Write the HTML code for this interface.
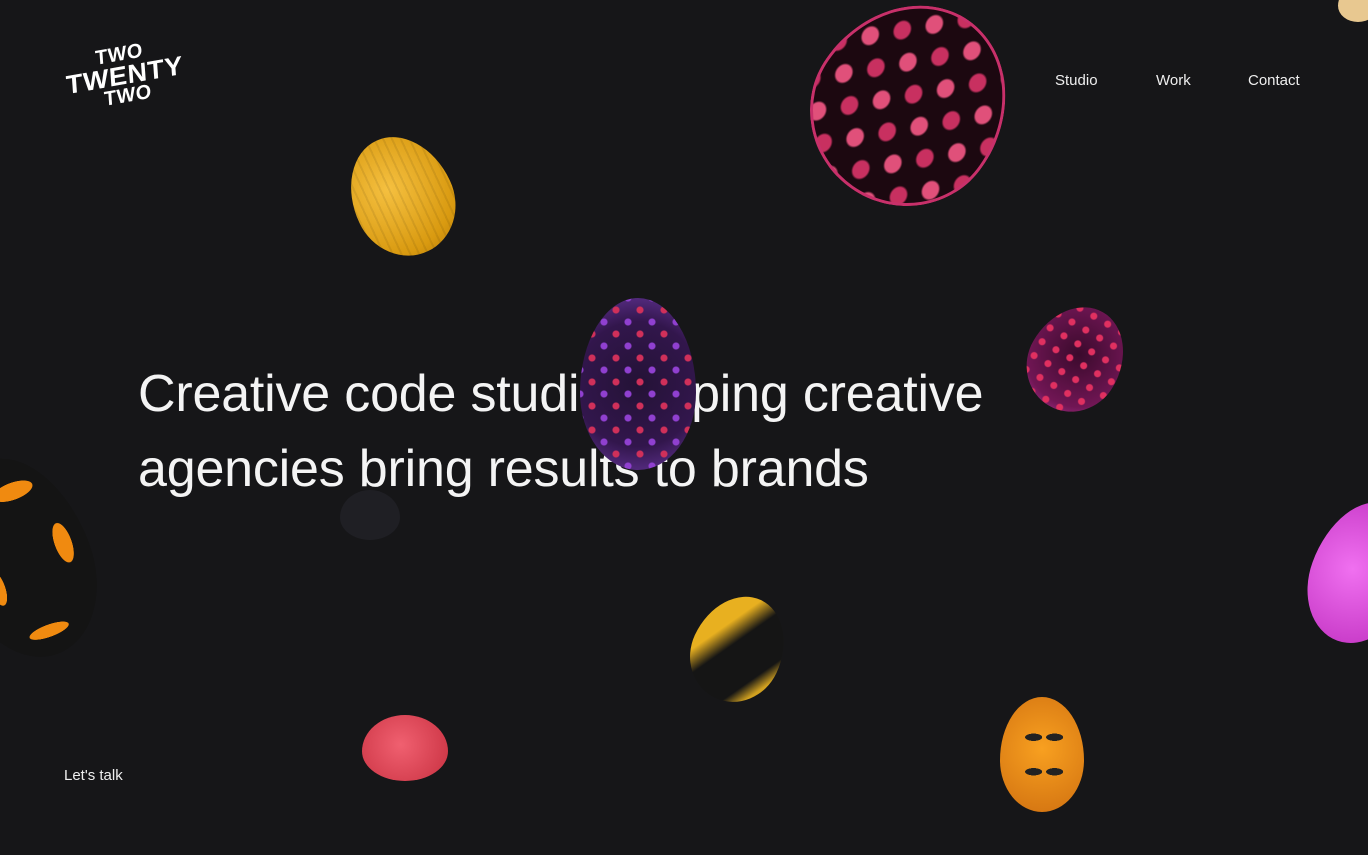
<!DOCTYPE html>
<html><head><meta charset="utf-8"><style>
html,body{margin:0;padding:0;width:1368px;height:855px;overflow:hidden;background:#161618;font-family:"Liberation Sans",sans-serif;color:#fff}
.e{position:absolute;border-radius:50% 50% 50% 50%/55% 55% 45% 45%;overflow:hidden}
.nav{position:absolute;top:72px;font-size:15px;color:#eee}
h1{position:absolute;left:138px;top:357px;margin:0;font-weight:400;font-size:52px;line-height:75px;letter-spacing:-0.2px;color:#f4f4f4;width:950px}
</style></head><body>
<div style="position:absolute;left:62px;top:44px;width:125px;transform:rotate(-10deg) skewX(-6deg);font-weight:900;line-height:21px;text-align:center;letter-spacing:0.5px">
<div style="font-size:20px;margin-left:-8px">TWO</div><div style="font-size:26px;transform:scaleX(1.05)">TWENTY</div><div style="font-size:20px;margin-left:4px">TWO</div></div>
<div class="nav" style="left:1055px">Studio</div>
<div class="nav" style="left:1156px">Work</div>
<div class="nav" style="left:1248px">Contact</div>
<div style="position:absolute;left:64px;top:767px;font-size:15px;color:#eee">Let's talk</div>
<h1>Creative code studio helping creative<br>agencies bring results to brands</h1>
<!-- eggs -->
<div class="e" style="left:815px;top:2px;width:190px;height:205px;transform:rotate(35deg);background:radial-gradient(ellipse 9px 11px,#e0507a 0 80%,transparent 100%) 0 0/46px 46px,radial-gradient(ellipse 9px 11px,#c83060 0 80%,transparent 100%) 23px 23px/46px 46px,#1c0810;box-shadow:inset 0 0 0 3px #c8306a"></div>
<div class="e" style="left:352px;top:135px;width:100px;height:122px;transform:rotate(-25deg);background:repeating-linear-gradient(90deg,rgba(0,0,0,.08) 0 2px,transparent 2px 8px),radial-gradient(circle at 40% 40%,#f5c040,#d99a10 70%,#b57a08)"></div>
<div class="e" style="left:580px;top:298px;width:116px;height:172px;background:radial-gradient(circle,#d0305a 0 3px,transparent 4px) 0 0/24px 24px,radial-gradient(circle,#9040d0 0 3px,transparent 4px) 12px 12px/24px 24px,radial-gradient(circle at 50% 50%,#241236,#32164c 60%,#6a38a0)"></div>
<div class="e" style="left:1030px;top:305px;width:92px;height:108px;transform:rotate(30deg);background:radial-gradient(circle,#e03060 0 3px,transparent 4px) 0 0/16px 16px,radial-gradient(circle at 50% 45%,#3a0a2c,#701654 70%,#b0389a)"></div>
<div class="e" style="left:-45px;top:455px;width:135px;height:205px;transform:rotate(-20deg);background:radial-gradient(ellipse 34px 14px at 60% 18%,#f08a10 60%,transparent 62%),radial-gradient(ellipse 14px 34px at 82% 50%,#f08a10 60%,transparent 62%),radial-gradient(ellipse 34px 10px at 50% 88%,#f08a10 60%,transparent 62%),radial-gradient(ellipse 12px 30px at 25% 60%,#f08a10 60%,transparent 62%),#141414"></div>
<div class="e" style="left:340px;top:490px;width:60px;height:50px;background:#1f1f24"></div>
<div class="e" style="left:693px;top:595px;width:90px;height:108px;transform:rotate(25deg);background:linear-gradient(120deg,#e8b020 30%,#151515 45%,#151515 75%,#d0a020 85%)"></div>
<div class="e" style="left:1312px;top:500px;width:100px;height:145px;transform:rotate(20deg);background:radial-gradient(circle at 40% 50%,#f070f0,#c030c0)"></div>
<div class="e" style="left:362px;top:715px;width:86px;height:66px;background:radial-gradient(circle at 45% 45%,#f06070,#c83040)"></div>
<div class="e" style="left:1000px;top:697px;width:84px;height:115px;background:radial-gradient(ellipse 14px 6px at 40% 35%,#222 60%,transparent 62%),radial-gradient(ellipse 14px 6px at 65% 35%,#222 60%,transparent 62%),radial-gradient(ellipse 14px 6px at 40% 65%,#222 60%,transparent 62%),radial-gradient(ellipse 14px 6px at 65% 65%,#222 60%,transparent 62%),radial-gradient(circle at 50% 45%,#f8a020,#d07010)"></div>
<div class="e" style="left:1338px;top:-14px;width:40px;height:36px;background:#e8c890"></div>
</body></html>
